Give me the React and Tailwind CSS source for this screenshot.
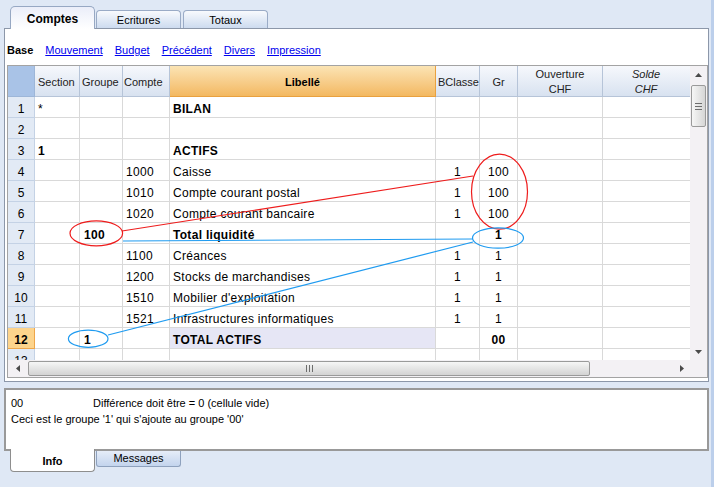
import React from "react";

const COLS = "grid grid-cols-[27px_45px_43px_47px_266px_44px_38px_85px_100px]";

const rows = [
  { s: "*", l: "BILAN", lb: true },
  {},
  { s: "1", sb: true, l: "ACTIFS", lb: true },
  { c: "1000", l: "Caisse", b: "1", g: "100" },
  { c: "1010", l: "Compte courant postal", b: "1", g: "100" },
  { c: "1020", l: "Compte courant bancaire", b: "1", g: "100" },
  { gp: "100", l: "Total liquidité", lb: true, g: "1", gb: true },
  { c: "1100", l: "Créances", b: "1", g: "1" },
  { c: "1200", l: "Stocks de marchandises", b: "1", g: "1" },
  { c: "1510", l: "Mobilier d'exploitation", b: "1", g: "1" },
  { c: "1521", l: "Infrastructures informatiques", b: "1", g: "1" },
  { gp: "1", l: "TOTAL ACTIFS", lb: true, g: "00", gb: true, hl: true },
  {},
];

const cell =
  "h-[21px] pt-[3px] flex items-center border-r border-b border-[#d9d9d9] text-[12px] tracking-[0.3px] text-black whitespace-nowrap overflow-hidden";
const head =
  "h-[31px] pt-[2px] flex items-center border-r border-b border-[#b6c4d8] bg-linear-to-b from-[#f6f8fc] to-[#d8e2f0] text-[11px] text-[#222] leading-[15px] whitespace-nowrap overflow-hidden";

function Grip({ vertical }) {
  return vertical ? (
    <div className="flex flex-col gap-[2px]">
      <div className="w-[7px] h-px bg-[#6d6d6d]" />
      <div className="w-[7px] h-px bg-[#6d6d6d]" />
      <div className="w-[7px] h-px bg-[#6d6d6d]" />
    </div>
  ) : (
    <div className="flex gap-[2px]">
      <div className="w-px h-[7px] bg-[#6d6d6d]" />
      <div className="w-px h-[7px] bg-[#6d6d6d]" />
      <div className="w-px h-[7px] bg-[#6d6d6d]" />
    </div>
  );
}

export default function App() {
  return (
    <div className="relative w-[714px] h-[487px] overflow-hidden bg-[#dfe8f5] flex font-['Liberation_Sans',Arial,sans-serif]">
      <div className="w-[711px] flex flex-col">
        {/* top tabs */}
        <div className="h-[28px] pl-[10px] flex items-end gap-[1px]">
          <div className="relative z-10 -mb-px h-[23px] w-[85px] pt-px rounded-t-[5px] border border-b-0 border-[#97a8c3] bg-linear-to-b from-[#ebeef9] to-white flex items-center justify-center text-[12px] font-bold text-black">
            Comptes
          </div>
          <div className="h-[18px] w-[85px] pt-px rounded-t-[4px] border border-b-0 border-[#9aabc6] bg-linear-to-b from-[#f8fafd] to-[#cddbef] flex items-center justify-center text-[11px] text-black">
            Ecritures
          </div>
          <div className="ml-px h-[18px] w-[85px] pt-px rounded-t-[4px] border border-b-0 border-[#9aabc6] bg-linear-to-b from-[#f8fafd] to-[#cddbef] flex items-center justify-center text-[11px] text-black">
            Totaux
          </div>
        </div>

        {/* main panel */}
        <div className="ml-[4px] w-[705px] h-[354px] border border-[#8c97a9] bg-white px-px flex flex-col">
          <div className="h-[36px] pt-[7px] pl-px flex items-center gap-[12px] text-[11px]">
            <span className="font-bold text-black">Base</span>
            <span className="text-[#0000ee] underline">Mouvement</span>
            <span className="text-[#0000ee] underline">Budget</span>
            <span className="text-[#0000ee] underline">Précédent</span>
            <span className="text-[#0000ee] underline">Divers</span>
            <span className="text-[#0000ee] underline">Impression</span>
          </div>

          <div className="ml-px w-[701px] h-[313px] border border-[#a3a3a3] flex flex-col">
            <div className="flex h-[294px]">
              <div className="w-[682px] h-[294px] overflow-hidden">
                <div className={`${COLS} w-[695px]`}>
                  <div className="h-[31px] bg-[#a9c3e7] border-r border-b border-[#9db6d8]" />
                  <div className={`${head} pl-[3px]`}>Section</div>
                  <div className={`${head} pl-[2px]`}>Groupe</div>
                  <div className={`${head} pl-[1px]`}>Compte</div>
                  <div className="h-[31px] pt-[2px] flex items-center justify-center border-r border-b border-[#e9a13f] bg-linear-to-b from-[#fbe4b4] to-[#f3b860] text-[11px] font-bold text-black">
                    Libellé
                  </div>
                  <div className={`${head} pl-[2px]`}>BClasse</div>
                  <div className={`${head} justify-center`}>Gr</div>
                  <div className={`${head} justify-center text-center`}>
                    Ouverture
                    <br />
                    CHF
                  </div>
                  <div className={`${head} justify-center text-center italic pr-[13px]`}>
                    Solde
                    <br />
                    CHF
                  </div>

                  {rows.map((r, i) => {
                    const n = i + 1;
                    const sel = r.hl;
                    return (
                      <React.Fragment key={n}>
                        <div
                          className={
                            sel
                              ? "h-[21px] pt-[3px] flex items-center justify-center border-r border-b border-[#eea64a] bg-[#fdd48c] text-[12px] font-bold text-black"
                              : "h-[21px] pt-[3px] flex items-center justify-center border-r border-b border-[#c4d2e5] bg-[#e2eaf5] text-[12px] text-black"
                          }
                        >
                          {n}
                        </div>
                        <div className={`${cell} pl-[3px] ${r.sb ? "font-bold" : ""}`}>{r.s}</div>
                        <div className={`${cell} pl-[4px] font-bold`}>{r.gp}</div>
                        <div className={`${cell} pl-[3px]`}>{r.c}</div>
                        <div className={`${cell} pl-[3px] ${r.lb ? "font-bold" : ""} ${r.hl ? "bg-[#e6e6f5]" : ""}`}>
                          {r.l}
                        </div>
                        <div className={`${cell} justify-center`}>{r.b}</div>
                        <div className={`${cell} justify-center ${r.gb ? "font-bold" : ""}`}>{r.g}</div>
                        <div className={cell} />
                        <div className={cell} />
                      </React.Fragment>
                    );
                  })}
                </div>
              </div>

              {/* vertical scrollbar */}
              <div className="w-[17px] h-[294px] bg-[#f3f1f4] flex flex-col items-center">
                <div className="h-[17px] flex items-center justify-center">
                  <svg width="7" height="4" viewBox="0 0 7 4">
                    <polygon points="3.5,0 7,4 0,4" fill="#4a4a4a" />
                  </svg>
                </div>
                <div className="mt-[2px] w-[15px] h-[42px] rounded-[2px] border border-[#9a9a9a] bg-linear-to-r from-[#f6f6f6] to-[#d6d6d6] flex items-center justify-center">
                  <Grip vertical />
                </div>
                <div className="flex-1" />
                <div className="h-[17px] flex items-center justify-center">
                  <svg width="7" height="4" viewBox="0 0 7 4">
                    <polygon points="0,0 7,0 3.5,4" fill="#4a4a4a" />
                  </svg>
                </div>
              </div>
            </div>

            {/* horizontal scrollbar */}
            <div className="flex h-[17px]">
              <div className="w-[682px] h-[17px] bg-[#f3f1f4] flex items-center">
                <div className="w-[20px] flex items-center justify-center">
                  <svg width="4" height="7" viewBox="0 0 4 7">
                    <polygon points="0,3.5 4,0 4,7" fill="#4a4a4a" />
                  </svg>
                </div>
                <div className="w-[562px] h-[15px] rounded-[2px] border border-[#9a9a9a] bg-linear-to-b from-[#f6f6f6] to-[#d3d3d3] flex items-center justify-center">
                  <Grip />
                </div>
                <div className="flex-1" />
                <div className="w-[17px] flex items-center justify-center">
                  <svg width="4" height="7" viewBox="0 0 4 7">
                    <polygon points="0,0 4,3.5 0,7" fill="#4a4a4a" />
                  </svg>
                </div>
              </div>
              <div className="w-[17px] h-[17px] bg-[#f3f1f4]" />
            </div>
          </div>
        </div>

        {/* info panel */}
        <div className="mt-[6px] ml-[4px] w-[705px] h-[63px] border-2 border-[#999] bg-white pl-[5px] pt-[5px] text-[11px] leading-[16px] text-black">
          <div>
            <span className="inline-block w-[82px]">00</span>
            Différence doit être = 0 (cellule vide)
          </div>
          <div>Ceci est le groupe '1' qui s'ajoute au groupe '00'</div>
        </div>

        {/* bottom tabs */}
        <div className="pl-[10px] flex items-start gap-px">
          <div className="relative z-10 -mt-[2px] h-[23px] w-[85px] rounded-b-[4px] border border-t-0 border-[#8e8e8e] bg-white pt-[3px] flex items-center justify-center text-[11px] font-bold text-black">
            Info
          </div>
          <div className="h-[16px] w-[85px] rounded-b-[3px] border border-t-0 border-[#8ea1bd] bg-linear-to-b from-[#e6edf8] to-[#c3d4ed] flex items-center justify-center text-[11px] text-black">
            Messages
          </div>
        </div>
      </div>
      <div className="w-[3px] bg-[#bccfeb]" />

      {/* annotations */}
      <svg className="absolute inset-0 pointer-events-none" width="714" height="487" viewBox="0 0 714 487">
        <g fill="none" strokeWidth="1.2">
          <ellipse cx="96.3" cy="233.3" rx="26.3" ry="12.5" stroke="#ee1c1c" />
          <ellipse cx="499.5" cy="191.7" rx="28" ry="37.5" stroke="#ee1c1c" />
          <line x1="122" y1="231" x2="473" y2="176" stroke="#ee1c1c" />
          <ellipse cx="498" cy="238" rx="25.5" ry="10.2" stroke="#1f9bf0" />
          <line x1="123" y1="241" x2="472.5" y2="239" stroke="#1f9bf0" />
          <ellipse cx="88.2" cy="338.7" rx="19.8" ry="8.6" stroke="#1f9bf0" />
          <line x1="108" y1="335" x2="473" y2="242" stroke="#1f9bf0" />
        </g>
      </svg>
    </div>
  );
}
